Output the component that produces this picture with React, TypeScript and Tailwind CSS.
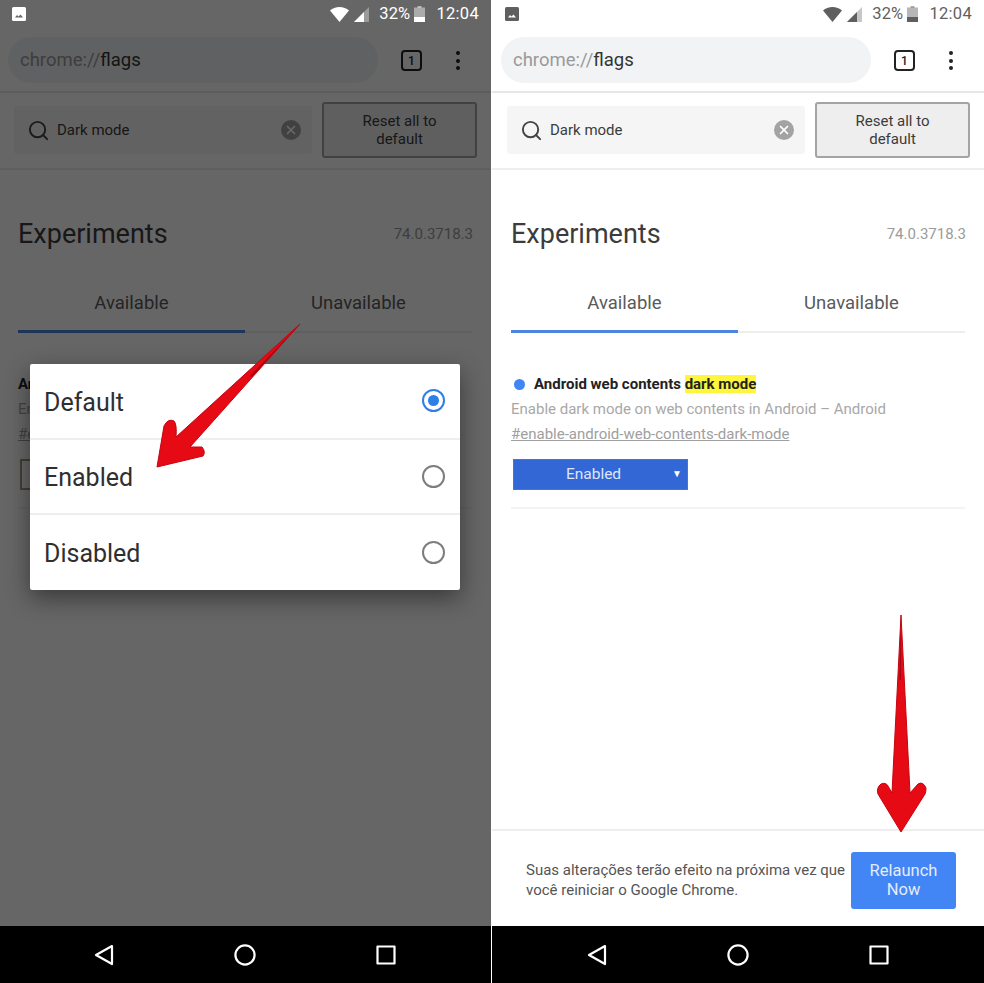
import { Search, X } from "lucide-react";

const FONT = "font-['Roboto','Liberation_Sans',sans-serif]";

function StatusBar({ dark }: { dark: boolean }) {
  const color = dark ? "text-white" : "text-[#5f5f5f]";
  return (
    <div className={`relative z-10 flex h-[28px] shrink-0 items-center pl-[13px] pr-[12px] ${color}`}>
      {/* Gallery notification */}
      <svg width="14" height="14" viewBox="0 0 14 14" className="mb-[1px]">
        <rect width="14" height="14" rx="1.5" fill="currentColor" />
        <path d="M3 10.5 5 8l1.5 1.5L8.5 7.5l2.5 3z" fill={dark ? "#666" : "#fff"} />
      </svg>
      <div className="ml-auto flex items-center">
        {/* Wifi */}
        <svg width="19" height="15" viewBox="0 0 19 15">
          <path d="M0 3.5C2.5 1.2 5.8 0 9.5 0s7 1.2 9.5 3.5L9.5 15z" fill="currentColor" />
        </svg>
        {/* Signal */}
        <svg width="15" height="15" viewBox="0 0 15 15" className="ml-[5px]">
          <path d="M0 15 15 0v15z" fill="currentColor" opacity="0.35" />
          <path d="M0 15 10 5v10z" fill="currentColor" />
        </svg>
        <span className="ml-[10px] text-[16.5px] leading-none tracking-[0.2px]">32%</span>
        {/* Battery */}
        <svg width="11" height="16" viewBox="0 0 11 16" className="ml-[4px]">
          <rect x="3.5" y="0" width="4" height="2" fill="currentColor" opacity="0.5" />
          <rect x="0" y="1.5" width="11" height="14.5" fill="currentColor" opacity="0.45" />
          <rect x="0" y="11" width="11" height="5" fill="currentColor" />
        </svg>
        <span className="ml-[11px] text-[16.5px] leading-none tracking-[0.3px]">12:04</span>
      </div>
    </div>
  );
}

function Toolbar() {
  return (
    <div className="flex h-[65px] shrink-0 items-start border-b-2 border-[#e6e6e6] pl-[9px] pt-[9px]">
      <div className="flex h-[46px] w-[370px] items-center rounded-full bg-[#f1f3f4] pl-[12px] pt-[2px] text-[18.5px] text-[#9a9a9a]">
        chrome://<span className="text-[#333]">flags</span>
      </div>
      <div className="ml-[23px] mt-[13px] flex h-[21px] w-[21px] items-center justify-center rounded-[4px] border-2 border-[#222] text-[12px] font-medium text-[#222]">
        1
      </div>
      <div className="ml-[34px] mt-[14px] flex flex-col gap-[3.5px]">
        <span className="h-[4px] w-[4px] rounded-full bg-[#222]" />
        <span className="h-[4px] w-[4px] rounded-full bg-[#222]" />
        <span className="h-[4px] w-[4px] rounded-full bg-[#222]" />
      </div>
    </div>
  );
}

function SearchRow() {
  return (
    <div className="flex h-[77px] shrink-0 items-start gap-[10px] border-b-2 border-[#eeeeee] pl-[15px] pt-[9px]">
      <div className="mt-[4px] flex h-[48px] w-[298px] items-center rounded-[3px] bg-[#f5f5f5] pl-[13px] pr-[11px]">
        <Search className="h-[23px] w-[23px] text-[#444]" strokeWidth={2} />
        <span className="ml-[7px] text-[15px] text-[#3c3c3c]">Dark mode</span>
        <span className="ml-auto flex h-[20px] w-[20px] items-center justify-center rounded-full bg-[#a3a3a3]">
          <X className="h-[14px] w-[14px] text-white" strokeWidth={3} />
        </span>
      </div>
      <div className="flex h-[56px] w-[155px] items-center justify-center rounded-[3px] border-2 border-[#a4a4a4] bg-[#eeeeee] text-center text-[15px] leading-[18px] text-[#3c3c3c]">
        Reset all to
        <br />
        default
      </div>
    </div>
  );
}

function Heading() {
  return (
    <>
      <div className="flex items-center justify-between pl-[19px] pr-[18px] pt-[47px]">
        <h1 className="text-[27px] leading-[34px] text-[#3c3c3c]">Experiments</h1>
        <span className="text-[15px] text-[#9b9b9b]">74.0.3718.3</span>
      </div>
      <div className="mx-[19px] mt-[35px] flex text-center text-[18.5px] leading-[24px] text-[#5a5a5a]">
        <div className="h-[47px] w-[228px] border-b-[3px] border-[#4a86dc] pt-[5px]">Available</div>
        <div className="h-[47px] w-[228px] border-b-2 border-[#eeeeee] pt-[5px]">Unavailable</div>
      </div>
    </>
  );
}

function FlagRow({ enabled }: { enabled: boolean }) {
  return (
    <div className="mx-[19px] mt-[39px] h-[137px] border-b-2 border-[#f4f4f4] text-[15px]">
      <div className="flex h-[24px] items-center font-bold text-[#222]">
        {enabled && <span className="ml-[3px] mr-[9px] h-[11px] w-[11px] rounded-full bg-[#4285f4]" />}
        <span>
          Android web contents <span className={enabled ? "bg-[#fdf63d]" : ""}>dark mode</span>
        </span>
      </div>
      <p className="mt-[1px] leading-[24px] text-[#a8a8a8]">Enable dark mode on web contents in Android – Android</p>
      <p className="mt-[1px] leading-[24px] text-[#a0a0a0] underline">#enable-android-web-contents-dark-mode</p>
      {enabled ? (
        <div className="relative ml-[2px] mt-[13px] flex h-[31px] w-[175px] items-center justify-center border border-[#6b7280] bg-[#3367d6] pr-[14px] text-[15.5px] text-[#dbe6fb]">
          Enabled
          <span className="absolute right-[5px] top-[6px] text-[10px] text-white">▼</span>
        </div>
      ) : (
        <div className="ml-[2px] mt-[13px] h-[31px] w-[175px] border-2 border-[#a79a85]" />
      )}
    </div>
  );
}

function NavBar() {
  return (
    <div className="relative z-10 flex h-[57px] shrink-0 items-center bg-black pl-[95px] text-white">
      <svg width="20" height="22" viewBox="0 0 20 22" fill="none" stroke="currentColor" strokeWidth="2.2" strokeLinejoin="round">
        <path d="M18 2 2 11l16 9z" />
      </svg>
      <svg width="22" height="22" viewBox="0 0 22 22" fill="none" stroke="currentColor" strokeWidth="2.2" className="ml-[120px]">
        <circle cx="11" cy="11" r="9.6" />
      </svg>
      <svg width="20" height="20" viewBox="0 0 20 20" fill="none" stroke="currentColor" strokeWidth="2.2" strokeLinejoin="round" className="ml-[120px]">
        <rect x="1.5" y="1.5" width="17" height="17" />
      </svg>
    </div>
  );
}

function RadioOption({ label, selected, last }: { label: string; selected?: boolean; last?: boolean }) {
  return (
    <div className={`flex items-center justify-between pl-[14px] pr-[15px] ${last ? "h-[75px]" : "h-[75.5px] border-b-2 border-[#eeeeee]"}`}>
      <span className="mt-[3px] text-[25px] text-[#2f2f2f]">{label}</span>
      {selected ? (
        <span className="flex h-[23px] w-[23px] items-center justify-center rounded-full border-2 border-[#2f7fe6]">
          <span className="h-[11px] w-[11px] rounded-full bg-[#2f7fe6]" />
        </span>
      ) : (
        <span className="h-[23px] w-[23px] rounded-full border-2 border-[#7d7d7d]" />
      )}
    </div>
  );
}

function LeftPanel() {
  return (
    <div className="relative -ml-px flex h-[983px] w-[492px] shrink-0 flex-col overflow-hidden bg-white">
      <StatusBar dark />
      <Toolbar />
      <SearchRow />
      <div className="flex-1">
        <Heading />
        <FlagRow enabled={false} />
      </div>
      <NavBar />

      {/* Scrim */}
      <div className="absolute inset-x-0 bottom-[57px] top-0 bg-black/60" />

      {/* Dialog */}
      <div className="absolute left-[31px] top-[364px] w-[430px] rounded-[2px] bg-white shadow-[0_8px_24px_rgba(0,0,0,0.45)]">
        <RadioOption label="Default" selected />
        <RadioOption label="Enabled" />
        <RadioOption label="Disabled" last />
      </div>

      {/* Annotation arrow */}
      <svg className="absolute left-[151px] top-[320px]" width="155" height="152" viewBox="150 320 155 152">
        <path
          d="M300 324 190 447 202 447Q206 452 203 456L157 467 164 426Q168 418 174 421 177 424 176 437z"
          fill="#e60a14"
          stroke="#c50410"
          strokeWidth="1"
          strokeLinejoin="round"
        />
        <path d="M299 325 250 376 252 377z" fill="#a80510" />
      </svg>
    </div>
  );
}

function RightPanel() {
  return (
    <div className="relative flex h-[983px] w-[492px] shrink-0 flex-col overflow-hidden bg-white">
      <StatusBar dark={false} />
      <Toolbar />
      <SearchRow />
      <div className="flex-1">
        <Heading />
        <FlagRow enabled />
      </div>
      <div className="flex h-[97px] shrink-0 items-center border-t-2 border-[#eeeeee] pl-[34px] pr-[28px]">
        <p className="mt-[3px] w-[325px] text-[15px] leading-[20px] text-[#555]">
          Suas alterações terão efeito na próxima vez que você reiniciar o Google Chrome.
        </p>
        <div className="ml-auto mt-[3px] flex h-[57px] w-[105px] items-center justify-center rounded-[3px] bg-[#4285f4] text-center text-[16.5px] leading-[19px] text-[#e3edfd]">
          Relaunch
          <br />
          Now
        </div>
      </div>
      <NavBar />

      {/* Annotation arrow */}
      <svg className="absolute left-[384px] top-[612px]" width="52" height="222" viewBox="876 612 52 222">
        <path
          d="M901 615 910 793 918 784Q923 781 926 788 926 792 925 794L901 832 878 794Q876 788 881 784 886 782 888 786L892 793z"
          fill="#e60a14"
          stroke="#c50410"
          strokeWidth="1"
          strokeLinejoin="round"
        />
        <path d="M901 617 899.5 680 901 680z" fill="#a80510" />
      </svg>
    </div>
  );
}

export default function App() {
  return (
    <div className={`flex h-[983px] w-[984px] gap-[1px] overflow-hidden bg-white ${FONT}`}>
      <LeftPanel />
      <RightPanel />
    </div>
  );
}
